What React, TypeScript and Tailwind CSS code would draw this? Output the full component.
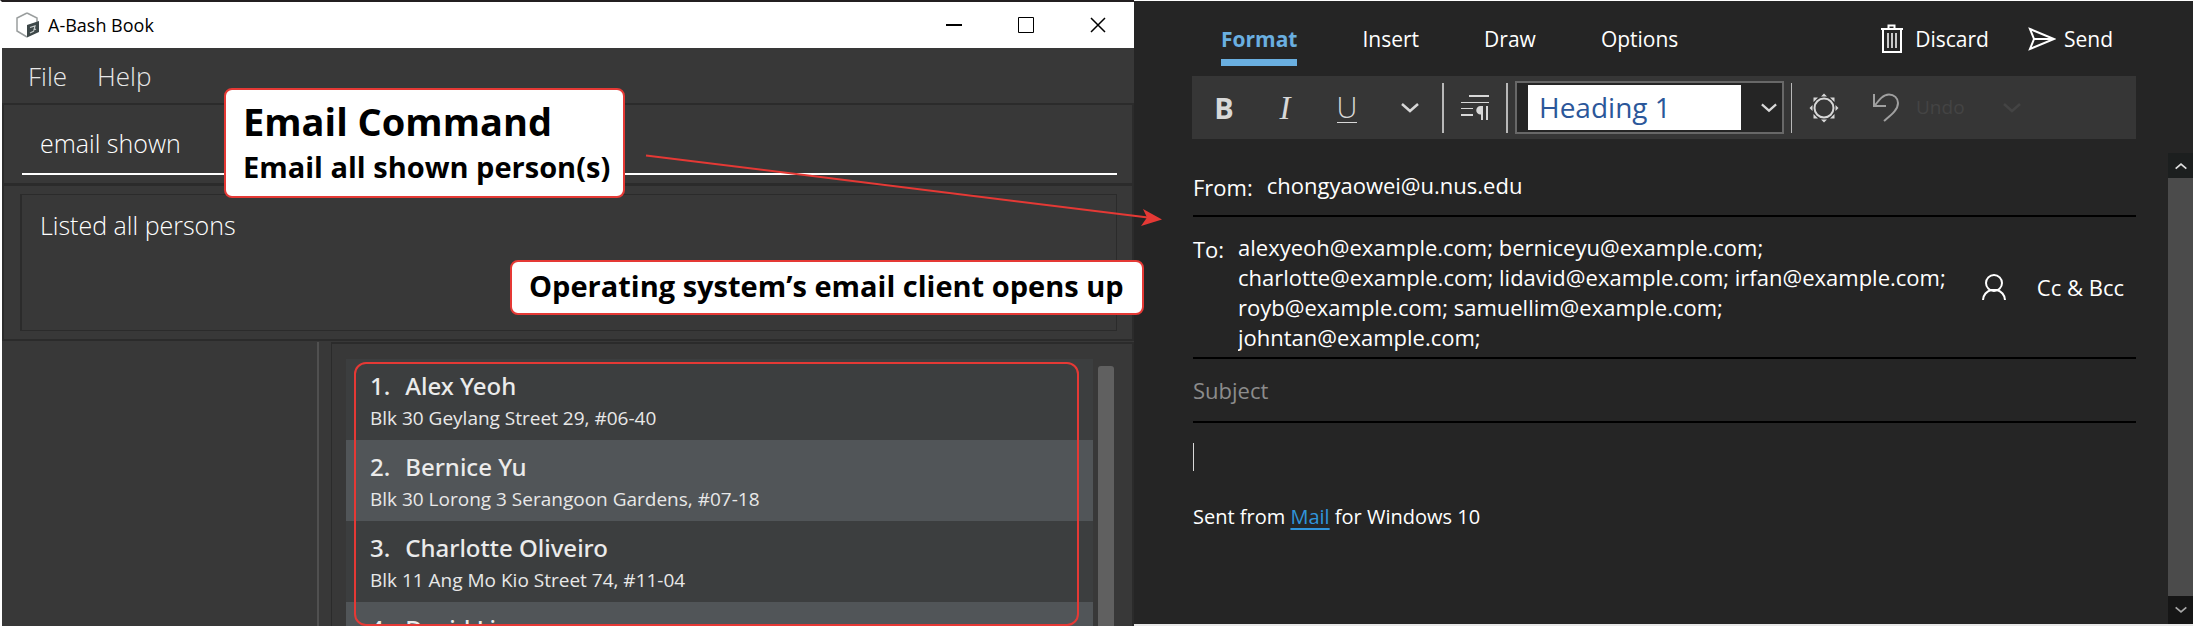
import type { ReactNode } from "react";

const persons = [
  { name: "Alex Yeoh", address: "Blk 30 Geylang Street 29, #06-40" },
  { name: "Bernice Yu", address: "Blk 30 Lorong 3 Serangoon Gardens, #07-18" },
  { name: "Charlotte Oliveiro", address: "Blk 11 Ang Mo Kio Street 74, #11-04" },
  { name: "David Li", address: "" },
];

const recipients = [
  "alexyeoh@example.com; berniceyu@example.com;",
  "charlotte@example.com; lidavid@example.com; irfan@example.com;",
  "royb@example.com; samuellim@example.com;",
  "johntan@example.com;",
].join("\n");

function Chevron({ className = "", up = false }: { className?: string; up?: boolean }) {
  return (
    <svg viewBox="0 0 18 10" fill="none" stroke="currentColor" strokeWidth="2.500" className={className} aria-hidden="true">
      <path d={up ? "M1 9 9 2l8 7" : "M1 1l8 7 8-7"} />
    </svg>
  );
}

function AppLogo() {
  return (
    <svg viewBox="0 0 26 26" fill="none" className="h-[26px] w-[26px]" aria-hidden="true">
      <path d="M12 1 22 6v4M12 1 2 6v13l10 6" stroke="#9a9e9e" strokeWidth="1.500" />
      <path d="M12 13 24 9v11l-12 5.500z" fill="#3d4748" />
      <path d="M15 15.500l5-1.500-1 4 2-1M15 21l4-2" stroke="#c9cdcd" strokeWidth="1.200" />
    </svg>
  );
}

function AddressBook() {
  return (
    <section className="flex min-h-0 min-w-0 flex-col border-t-2 border-l-2 border-t-[#231f20] border-l-white bg-[#383838] text-white">
      <header className="flex h-[46px] shrink-0 items-center bg-white pr-[28px] pl-[13px] text-black">
        <AppLogo />
        <h1 className="ml-[7px] text-[18px] leading-6">A-Bash Book</h1>
        <div className="ml-auto flex items-center gap-[56px]">
          <button type="button" aria-label="Minimize" className="h-4 w-4">
            <svg viewBox="0 0 16 16" className="h-4 w-4"><path d="M0 8h16" stroke="#000" strokeWidth="2" /></svg>
          </button>
          <button type="button" aria-label="Maximize" className="h-4 w-4">
            <svg viewBox="0 0 16 16" fill="none" className="h-4 w-4"><path d="M.5.5h15v15H.5z" stroke="#000" /></svg>
          </button>
          <button type="button" aria-label="Close" className="h-4 w-4">
            <svg viewBox="0 0 16 16" className="h-4 w-4"><path d="M1 1l14 14M15 1 1 15" stroke="#000" strokeWidth="1.500" /></svg>
          </button>
        </div>
      </header>

      <nav className="flex h-[55px] shrink-0 items-center gap-[30px] pl-[26px] text-[26px] leading-8 font-light text-[#e8e8e8]">
        <button type="button">File</button>
        <button type="button">Help</button>
      </nav>

      <div className="shrink-0 border-t-2 border-r-2 border-l-2 border-[#2b2b2b] pr-[15px] pb-2 pl-[18px]">
        <input
          aria-label="Command"
          defaultValue="email shown"
          className="block h-[70px] w-full border-b-2 border-white bg-transparent pt-2 pl-[18px] text-[25px] font-light outline-none"
        />
      </div>

      <div className="shrink-0 border-t-[3px] border-r-2 border-b-2 border-l-2 border-[#2b2b2b] pt-2 pr-[15px] pb-2 pl-4">
        <output className="block h-[137px] border border-l-2 border-[#2b2b2b] pt-3 pl-[18px] text-[25px] leading-9 font-light">
          Listed all persons
        </output>
      </div>

      <div className="flex min-h-0 flex-1 pt-px">
        <div className="w-[28%] shrink-0 border-r-2 border-[#505050]" />
        <div className="ml-3 flex min-w-0 flex-1 border-t-2 border-r-2 border-l border-[#2b2b2b] pt-[15px] pl-[14px]">
          <div className="relative min-w-0 flex-1 overflow-hidden">
            <ol>
              {persons.map((p, i) => (
                <li key={p.name} className="h-[81px] pt-[11px] pl-6 odd:bg-[#3c3e3f] even:bg-[#515558]">
                  <h2 className="flex gap-[15px] font-['Noto_Sans',sans-serif] text-[24px] leading-8 font-medium text-[#ebebeb]">
                    <span>{i + 1}.</span>
                    <span>{p.name}</span>
                  </h2>
                  <p className="text-[19px] leading-8 text-[#e8e8e8]">{p.address}</p>
                </li>
              ))}
            </ol>
            <div className="absolute top-[3px] right-[14px] bottom-0 left-2 rounded-xl border-2 border-[#e53935]" />
          </div>
          <div className="mt-[7px] mr-[18px] ml-[5px] w-4 rounded-t-[3px] bg-[#606060]" />
        </div>
      </div>
    </section>
  );
}

function TrashIcon() {
  return (
    <svg viewBox="0 0 22 30" fill="none" stroke="currentColor" className="h-[30px] w-[22px]" aria-hidden="true">
      <path d="M0 5h22M7.500 5V1.500h6V5" strokeWidth="2" />
      <path d="M2 5v23h18V5" strokeWidth="2" />
      <path d="M7 9v15M11 9v15M15 9v15" strokeWidth="1.500" />
    </svg>
  );
}

function SendIcon() {
  return (
    <svg viewBox="0 0 28 24" fill="none" stroke="currentColor" strokeWidth="2" className="h-6 w-7" aria-hidden="true">
      <path d="M2 2l24 10L2 22l4-10zM6 12h20" />
    </svg>
  );
}

function ParagraphIcon() {
  return (
    <svg viewBox="0 0 28 26" fill="none" stroke="currentColor" className="h-[26px] w-7" aria-hidden="true">
      <path d="M8 1h20M0 20h12" strokeWidth="2" />
      <path d="M0 7.500h28M0 13.500h12" strokeWidth="1" />
      <path d="M28 11H19.500a4 4 0 0 0 0 8.500H20V11z" fill="currentColor" stroke="none" />
      <path d="M21 11v14M26 11v14" strokeWidth="2" />
    </svg>
  );
}

function SunIcon() {
  return (
    <svg viewBox="0 0 30 30" className="h-[30px] w-[30px]" aria-hidden="true">
      <circle cx="15" cy="15" r="9.500" fill="none" stroke="currentColor" strokeWidth="2" />
      <path
        fill="currentColor"
        d="M12 3.500 15 .500l3 3zM12 26.500l3 3 3-3zM3.500 12 .500 15l3 3zM26.500 12l3 3-3 3zM4.500 4.500H9l-4.500 4.500zM25.500 4.500V9L21 4.500zM4.500 25.500V21L9 25.500zM25.500 25.500H21l4.500-4.500z"
      />
    </svg>
  );
}

function UndoIcon() {
  return (
    <svg viewBox="0 0 26 29" fill="none" stroke="#a0a0a0" strokeWidth="2" className="h-[29px] w-[26px]" aria-hidden="true">
      <path d="M1 1v12h12M1.500 13C6 7 10 1.500 16 1.500c5 0 9 3.500 9 8.500 0 7-7 12-14 18" />
    </svg>
  );
}

function PersonIcon() {
  return (
    <svg viewBox="0 0 24 26" fill="none" stroke="currentColor" strokeWidth="2" className="h-[26px] w-6" aria-hidden="true">
      <circle cx="12" cy="9" r="8" />
      <path d="M1 26c0-5 4-9 8-10h6c4 1 8 5 8 10" />
    </svg>
  );
}

function Row({ children, className = "" }: { children: ReactNode; className?: string }) {
  return <div className={`flex border-b-2 border-black ${className}`}>{children}</div>;
}

function MailClient() {
  return (
    <section className="flex min-h-0 min-w-0 flex-col border-t border-b-2 border-t-white border-b-[#e8e8e8] bg-[#252525] text-white">
      <header className="flex h-[75px] shrink-0 items-start pt-[22px] pr-[80px] pl-[87px] text-[21px] leading-8">
        <nav className="flex items-start gap-[65px]">
          <button type="button" className="border-b-[7px] border-[#6aafe0] pb-1 font-bold text-[#6aafe0]">Format</button>
          <button type="button">Insert</button>
          <button type="button">Draw</button>
          <button type="button">Options</button>
        </nav>
        <div className="ml-auto flex gap-[39px]">
          <button type="button" className="flex h-8 items-center gap-3"><TrashIcon />Discard</button>
          <button type="button" className="flex h-8 items-center gap-2"><SendIcon />Send</button>
        </div>
      </header>

      <div className="mr-[57px] ml-[58px] flex h-[63px] shrink-0 items-center bg-[#363636] text-[#d8d8d8]">
        <div className="flex items-center pl-[22px] leading-8">
          <button type="button" aria-label="Bold" className="w-5 text-[29px] font-bold">B</button>
          <button type="button" aria-label="Italic" className="ml-[41px] w-5 font-['Liberation_Serif',serif] text-[33px] italic">I</button>
          <button type="button" aria-label="Underline" className="ml-[42px] flex h-[30px] w-5 items-center justify-center border-b border-current text-[29px] font-light">U</button>
          <button type="button" aria-label="More font formatting" className="ml-[44px]"><Chevron className="h-[10px] w-[18px]" /></button>
        </div>
        <div className="ml-[23px] h-[50px] w-[2px] bg-[#b8b8b8]" />
        <button type="button" aria-label="Paragraph formatting" className="mx-[17px]"><ParagraphIcon /></button>
        <div className="h-[50px] w-[2px] bg-[#b8b8b8]" />
        <div className="relative ml-[7px] flex h-[53px] w-[269px] border-2 border-[#686868] bg-[#252525] py-[2px] pr-[41px] pl-[11px]">
          <select aria-label="Styles" className="h-[45px] w-full appearance-none bg-white pl-[11px] text-[28px] leading-[45px] text-[#2b579a] outline-none">
            <option>Heading 1</option>
          </select>
          <Chevron className="pointer-events-none absolute top-[20px] right-[5px] h-[10px] w-4" />
        </div>
        <div className="ml-[7px] h-[50px] w-px bg-[#b8b8b8]" />
        <button type="button" aria-label="Ink and theme" className="ml-[17px]"><SunIcon /></button>
        <button type="button" disabled className="ml-[34px] flex items-center gap-[17px] text-[19px] text-[#444]"><UndoIcon />Undo</button>
        <button type="button" disabled aria-label="Undo history" className="ml-[38px] text-[#444]"><Chevron className="h-[10px] w-[18px]" /></button>
      </div>

      <div className="flex min-h-0 flex-1">
        <div className="mr-[32px] ml-[59px] flex min-w-0 flex-1 flex-col text-[22px] leading-[30px]">
          <Row className="h-[78px] items-center pt-[15px]">
            <label htmlFor="from" className="pt-1 leading-[30px]">From:</label>
            <input id="from" defaultValue="chongyaowei@u.nus.edu" className="ml-[14px] h-[34px] min-w-0 flex-1 bg-transparent outline-none" />
          </Row>
          <Row className="h-[142px] items-start pt-[15px]">
            <label htmlFor="to" className="w-[45px] shrink-0 pt-[2px]">To:</label>
            <textarea id="to" rows={4} defaultValue={recipients} className="block h-[124px] min-w-0 flex-1 resize-none overflow-hidden bg-transparent whitespace-pre outline-none" />
            <button type="button" aria-label="Choose contacts" className="mt-[42px] ml-4 shrink-0"><PersonIcon /></button>
            <button type="button" className="mt-[40px] mr-[12px] ml-[31px] shrink-0">Cc &amp; Bcc</button>
          </Row>
          <Row className="h-[64px] items-center">
            <input aria-label="Subject" placeholder="Subject" className="w-full bg-transparent outline-none placeholder:text-[#8c8c8c]" />
          </Row>
          <div role="textbox" aria-label="Message body" className="pt-5 text-[20px]">
            <div className="h-7 w-px bg-[#d8d8d8]" />
            <p className="pt-[31px]">
              Sent from <a href="#mail" className="text-[#3095db] underline underline-offset-4">Mail</a> for Windows 10
            </p>
          </div>
        </div>
        <div className="mt-[14px] flex w-[25px] shrink-0 flex-col">
          <button type="button" aria-label="Scroll up" className="flex h-[25px] items-center justify-center bg-[#1c1f1f] text-[#e0e0e0]"><Chevron up className="h-2 w-3" /></button>
          <div className="flex-1 bg-[#4b4b4b]" />
          <button type="button" aria-label="Scroll down" className="flex h-[28px] items-center justify-center bg-[#161616] text-[#a8a8a8]"><Chevron className="h-2 w-3" /></button>
        </div>
      </div>
    </section>
  );
}

export default function App() {
  return (
    <main className="relative grid h-screen grid-cols-[1134fr_1059fr] grid-rows-[minmax(0,1fr)] overflow-hidden bg-[#252525] font-['Open_Sans',sans-serif]">
      <AddressBook />
      <MailClient />

      <svg viewBox="0 0 520 80" fill="none" className="pointer-events-none absolute top-[150px] left-[644px] h-[80px] w-[520px]" aria-hidden="true">
        <path d="M2 5.500 504 67.500" stroke="#e53935" strokeWidth="2" />
        <path d="M518 69.500 499 59l4 8.500-6 8.500z" fill="#e53935" />
      </svg>
      <div className="absolute top-[88px] left-[224px] rounded-lg border-2 border-[#e53935] bg-white pt-[8px] pr-[13px] pb-[7px] pl-[17px] font-bold whitespace-nowrap text-black">
        <p className="text-[38px] leading-[46px]">Email Command</p>
        <p className="text-[29px] leading-[45px]">Email all shown person(s)</p>
      </div>
      <p className="absolute top-[260px] left-[510px] rounded-lg border-2 border-[#e53935] bg-white pt-px pr-[18px] pb-[5px] pl-[17px] text-[29px] leading-[45px] font-bold whitespace-nowrap text-black">
        Operating system’s email client opens up
      </p>
    </main>
  );
}
